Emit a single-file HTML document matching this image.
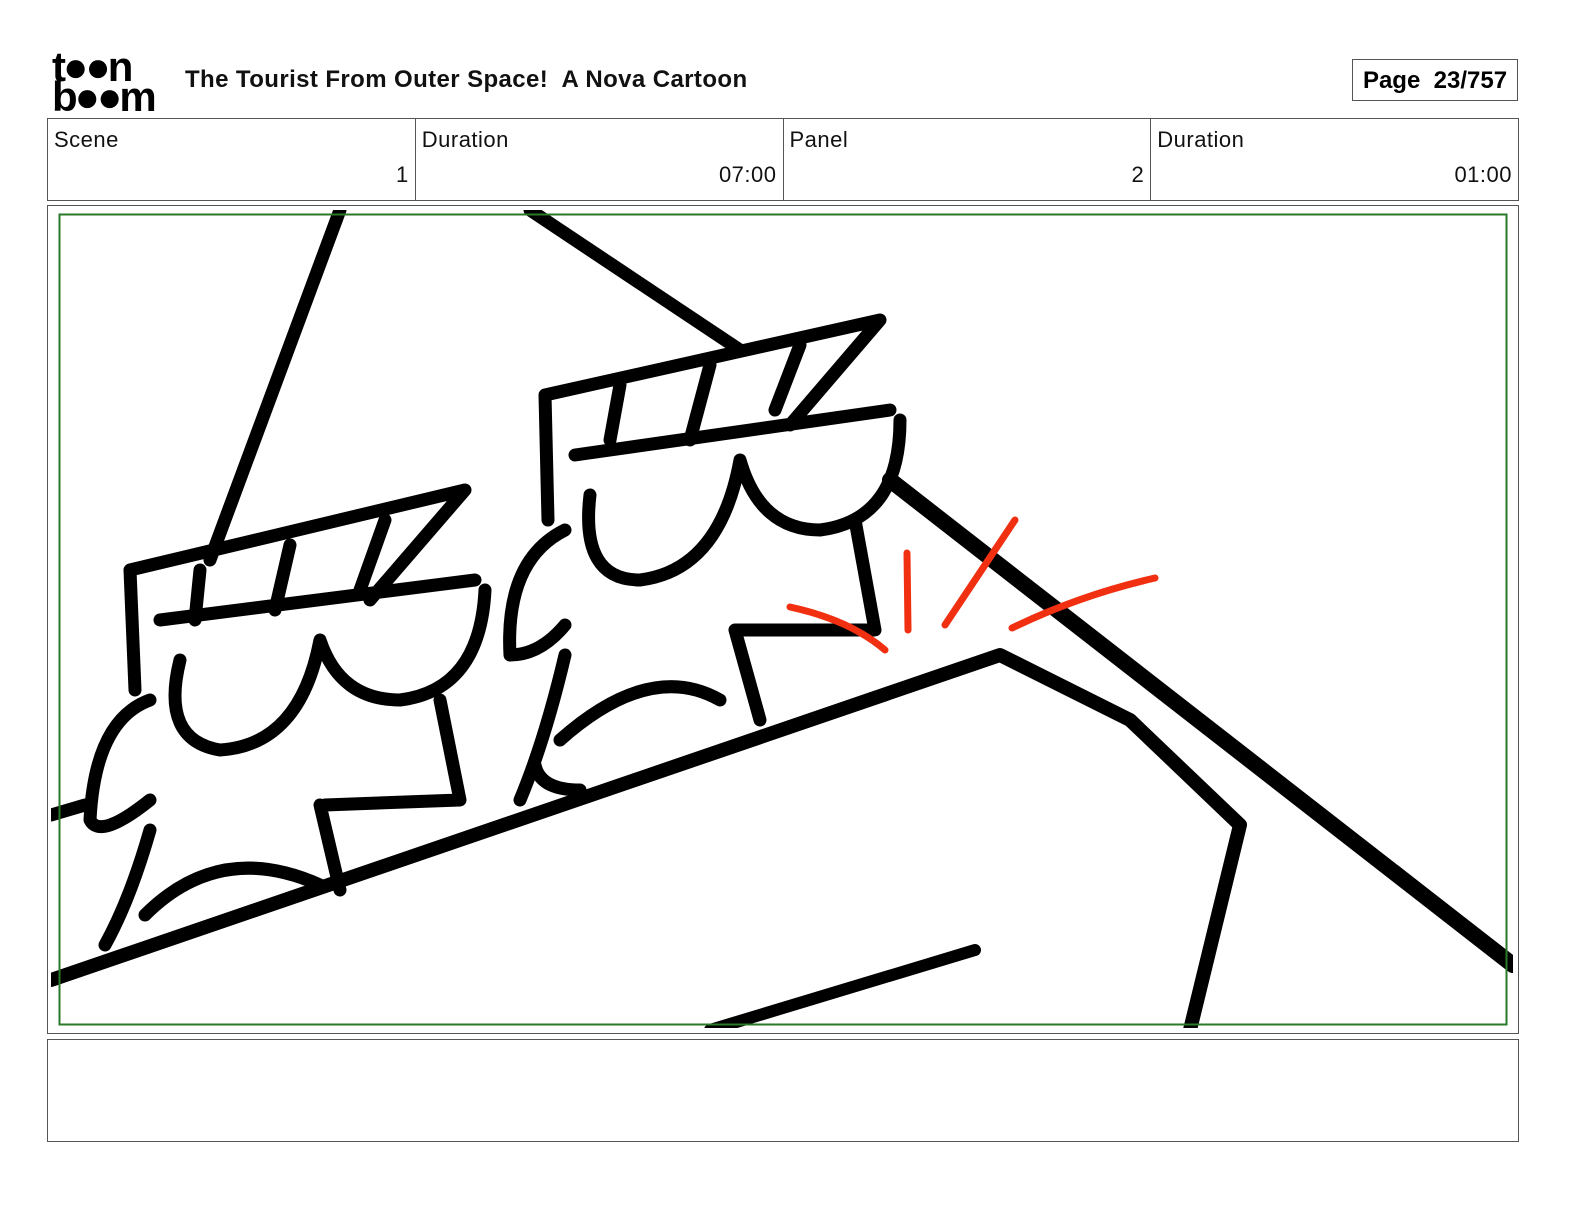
<!DOCTYPE html>
<html><head><style>
body{margin:0;width:1584px;height:1224px;background:#fff;position:relative;font-family:"Liberation Sans",sans-serif;overflow:hidden}
.a{position:absolute}
.title{left:185px;top:66px;font-size:24px;font-weight:bold;color:#111;letter-spacing:0.4px}
.page{left:1352px;top:59px;width:166px;height:42px;border:1px solid #555;box-sizing:border-box;font-size:24px;font-weight:bold;line-height:41px;text-align:center}
.tbl{left:47px;top:118px;width:1472px;height:83px;border:1px solid #555;box-sizing:border-box;display:flex}
.c{flex:1;border-right:1px solid #555;position:relative;font-size:22px;color:#111;letter-spacing:0.5px}
.c:last-child{border-right:none}
.c .l{position:absolute;left:6px;top:8px}
.c .v{position:absolute;right:6px;top:43px}
.box{border:1px solid #555;box-sizing:border-box}
.logo{font-weight:bold;font-size:42px;line-height:30px;left:52px;top:52px;letter-spacing:-3px}
</style></head><body>
<div class="a logo">t●●n<br>b●●m</div>
<div class="a title">The Tourist From Outer Space!&nbsp; A Nova Cartoon</div>
<div class="a page">Page&nbsp; 23/757</div>
<div class="a tbl">
<div class="c"><span class="l">Scene</span><span class="v">1</span></div>
<div class="c"><span class="l">Duration</span><span class="v">07:00</span></div>
<div class="c"><span class="l">Panel</span><span class="v">2</span></div>
<div class="c"><span class="l">Duration</span><span class="v">01:00</span></div>
</div>
<div class="a box" style="left:47px;top:205px;width:1472px;height:829px"></div>
<div class="a box" style="left:47px;top:1039px;width:1472px;height:103px"></div>
<svg class="a" style="left:0;top:0" width="1584" height="1224">
<defs><clipPath id="cp"><rect x="51" y="210" width="1462" height="818"/></clipPath></defs>
<g clip-path="url(#cp)" fill="none" stroke="#000" stroke-width="13" stroke-linecap="round" stroke-linejoin="round">
<path d="M340 210 L210 560"/>
<path d="M530 210 L740 350"/>
<path d="M890 480 L1513 965" stroke-width="16"/>
<path d="M51 980 L1000 655 L1130 720 L1240 825 L1190 1030" stroke-width="14"/>
<path d="M710 1030 L975 950" stroke-width="12"/>
<path d="M51 815 L85 805"/>
<path d="M130 570 L465 490 L370 600 M130 570 L135 690 M160 620 L475 580 M200 570 L195 620 M290 545 L275 610 M385 520 L360 590"/>
<path d="M545 395 L880 320 L790 425 M545 395 L548 520 M575 455 L890 410 M620 385 L610 440 M710 365 L690 440 M800 345 L775 410"/>
<path d="M180 660 Q160 740 220 750 Q300 745 320 640 Q340 700 400 700 Q480 690 485 590"/>
<path d="M150 700 Q95 720 90 820 Q100 840 150 800"/>
<path d="M150 830 Q130 900 105 945"/>
<path d="M145 915 Q220 840 320 885 M320 805 L340 890 M325 805 L460 800 L440 700"/>
<path d="M590 495 Q580 580 640 580 Q720 570 740 460 Q760 530 820 530 Q900 520 900 420"/>
<path d="M565 530 Q505 560 510 655 Q540 655 565 625"/>
<path d="M565 655 Q545 740 520 800"/>
<path d="M560 740 Q650 660 720 700 M735 630 L760 720 M735 630 L875 630 L855 520"/>
<path d="M535 765 Q540 790 580 790"/>
</g>
<g fill="none" stroke="#f03010" stroke-width="7" stroke-linecap="round">
<path d="M790 607 Q850 620 885 650"/>
<path d="M907 553 L908 630"/>
<path d="M945 625 L1015 520"/>
<path d="M1012 628 Q1080 595 1155 578"/>
</g>
<rect x="59.5" y="214.5" width="1447" height="810" fill="none" stroke="#2a7a2a" stroke-width="2"/>
</svg>
</body></html>
